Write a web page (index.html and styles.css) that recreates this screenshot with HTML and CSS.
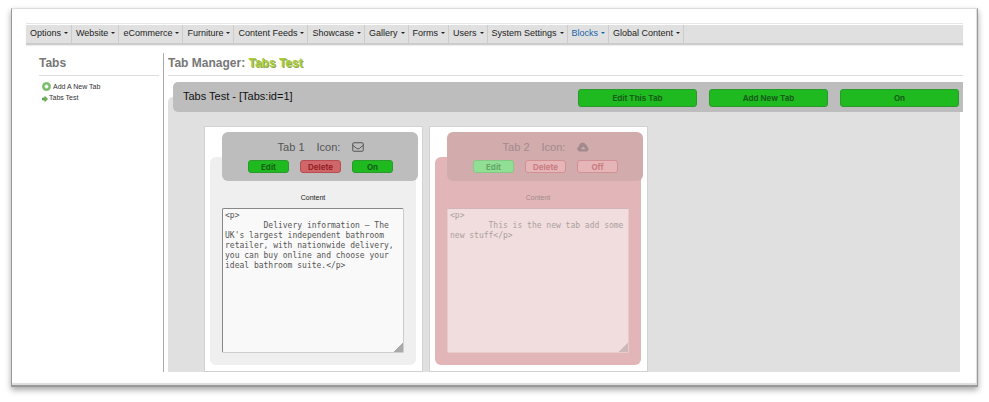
FILE: index.html
```html
<!DOCTYPE html>
<html lang="en">
<head>
<meta charset="utf-8">
<title>Tab Manager</title>
<link rel="stylesheet" href="styles.css">
</head>
<body>
<div class="frame">
  <nav class="nav">
    <a href="#">Options</a>
    <a href="#">Website</a>
    <a href="#">eCommerce</a>
    <a href="#">Furniture</a>
    <a href="#">Content Feeds</a>
    <a href="#">Showcase</a>
    <a href="#">Gallery</a>
    <a href="#">Forms</a>
    <a href="#">Users</a>
    <a href="#">System Settings</a>
    <a href="#" class="active">Blocks</a>
    <a href="#">Global Content</a>
  </nav>
  <div class="columns">
    <aside class="side">
      <h2 class="title">Tabs</h2>
      <ul class="links">
        <li><a href="#"><svg class="plus" viewBox="0 0 16 16"><circle cx="8" cy="8" r="7" fill="#6cb85c" stroke="#8fc685" stroke-width="2"/><path d="M8 4.500v7M4.500 8h7" stroke="#fff" stroke-width="3.4"/></svg>Add A New Tab</a></li>
        <li><a href="#"><svg class="arrow" viewBox="0 0 12 12"><path d="M1 4h5V1l5 5-5 5V8H1z" fill="#72b855" stroke="#438c35" stroke-width="1.4"/></svg>Tabs Test</a></li>
      </ul>
    </aside>
    <main class="main">
      <h1 class="title">Tab Manager: <span class="name">Tabs Test</span></h1>
      <section class="group">
        <header class="group-head">
          <h2>Tabs Test - [Tabs:id=1]</h2>
          <div class="actions">
            <button class="btn">Edit This Tab</button>
            <button class="btn">Add New Tab</button>
            <button class="btn">On</button>
          </div>
        </header>
        <div class="group-body">
          <article class="card">
            <header class="card-head">
              <div class="card-title"><span>Tab 1</span><span>Icon:</span>
                <svg class="icon" viewBox="0 0 24 24" fill="none" stroke="currentColor" stroke-width="2"><rect x="1.5" y="3.5" width="21" height="17" rx="2"/><path d="M1.5 8.5l8 6.5q2.500 1.800 5 0l8-6.500"/></svg>
              </div>
              <div class="card-actions">
                <button class="btn">Edit</button>
                <button class="btn red">Delete</button>
                <button class="btn">On</button>
              </div>
            </header>
            <div class="card-body">
              <label for="content1">Content</label>
              <textarea id="content1" spellcheck="false">&lt;p&gt;
	Delivery information – The UK's largest independent bathroom retailer, with nationwide delivery, you can buy online and choose your ideal bathroom suite.&lt;/p&gt;</textarea>
            </div>
          </article>
          <article class="card off">
            <header class="card-head">
              <div class="card-title"><span>Tab 2</span><span>Icon:</span>
                <svg class="icon" viewBox="0 0 24 24"><path d="M6 21a5.500 5.500 0 0 1-2-10.600A7 7 0 0 1 17 6.500a4.500 4.500 0 0 1 3 5A5 5 0 0 1 19 21z" fill="currentColor"/><path d="M7.500 16.500l5-5.500 5 5.500z" fill="#d2abac"/></svg>
              </div>
              <div class="card-actions">
                <button class="btn">Edit</button>
                <button class="btn red">Delete</button>
                <button class="btn red">Off</button>
              </div>
            </header>
            <div class="card-body">
              <label for="content2">Content</label>
              <textarea id="content2" spellcheck="false">&lt;p&gt;
	This is the new tab add some new stuff&lt;/p&gt;</textarea>
            </div>
          </article>
        </div>
      </section>
    </main>
  </div>
</div>
</body>
</html>
```
FILE: styles.css
```css
* { box-sizing: border-box; }

body {
  margin: 0;
  padding: 8px 11px 14px;
  background: #fff;
  color: #222;
  font-family: "Liberation Sans", Arial, sans-serif;
}

h1, h2, ul { margin: 0; padding: 0; }
a { color: inherit; text-decoration: none; }

.frame {
  padding: 14px 14px 13px;
  background: #fff;
  border: 1px solid #999;
  border-top-color: #ddd;
  border-bottom: 2px solid #999;
  box-shadow: 0 3px 6px rgba(0, 0, 0, 0.35), inset -1px -2px 1px #ddd;
}

.nav {
  display: flex;
  height: 22px;
  padding-top: 1px;
  border-top: 1px solid #e6e6e6;
  border-bottom: 2px solid #ccc;
  background: #e0e0e0;
  box-shadow: 0 1px 1px #eee, inset 0 1px #fff;
}

.nav a {
  display: flex;
  align-items: center;
  gap: 3px;
  padding: 0 3px 2px 4px;
  border-right: 1px solid #ccc;
  font-size: 9px;
  line-height: 12px;
  white-space: nowrap;
}

.nav a::after {
  content: "";
  border: 2px solid transparent;
  border-top-color: currentColor;
  border-bottom: 0;
}

.nav .active { color: #1763ab; }

.columns {
  display: flex;
  gap: 4px;
  padding-top: 8px;
}

.side {
  width: 138px;
  padding: 0 4px 0 13px;
  border-right: 1px solid #aaa;
}

.title {
  height: 23px;
  border-bottom: 1px solid #ddd;
  color: #777;
  font-size: 12px;
  line-height: 20px;
}

.name {
  color: #a9cb3c;
  text-shadow: 1px 1px 0 #8aa84a;
}

.links {
  padding: 5px 0 0 3px;
  list-style: none;
  font-size: 7px;
  color: #333;
}

.links a {
  display: flex;
  align-items: center;
  gap: 2px;
  height: 11px;
}

.plus { width: 9px; height: 9px; }
.arrow { width: 6px; height: 6px; margin-top: 3px; }
.links li + li a { gap: 1px; }

.main { flex: 1; min-width: 0; }

.group { padding-top: 6px; }

.group-head {
  position: relative;
  display: flex;
  align-items: center;
  justify-content: space-between;
  height: 30px;
  margin-left: 5px;
  padding: 0 4px 0 10px;
  border-radius: 5px 0 0 5px;
  background: #bdbdbd;
}

.group-head h2 {
  color: #111;
  font-size: 11px;
  line-height: 12px;
  font-weight: normal;
  padding-bottom: 2px;
}

.actions { display: flex; gap: 12px; padding-top: 2px; }

.btn {
  width: 119px;
  height: 18px;
  padding: 0;
  border: 1px solid #2a9a2d;
  border-radius: 3px;
  background: #1fba20;
  color: #176019;
  font: bold 8px/12px Inter, sans-serif;
}

.group-body {
  display: flex;
  gap: 6px;
  margin: -15px 3px 0 0;
  padding: 29px 0 0 36px;
  border-radius: 5px 0 0 0;
  background: #e0e0e0;
}

.card {
  width: 219px;
  padding: 5px 4px 6px 5px;
  border: 1px solid #d2d2d2;
  background: #fff;
}

.card-head {
  position: relative;
  height: 49px;
  margin-left: 12px;
  padding-top: 9px;
  border-radius: 6px;
  background: #bdbdbd;
}

.card-title {
  display: flex;
  align-items: center;
  justify-content: center;
  gap: 12px;
  height: 12px;
  padding-left: 2px;
  color: #555;
  font-size: 11px;
}

.icon { width: 12px; height: 12px; }

.card-actions {
  display: flex;
  justify-content: center;
  gap: 11px;
  padding: 7px 0 0 1px;
}

.card-actions .btn {
  width: 41px;
  height: 13px;
  line-height: 10px;
}

.card-actions .red {
  border-color: #b94c50;
  background: #cf6669;
  color: #982126;
}

.card-body {
  margin: -24px 2px 0 0;
  padding: 35px 12px 12px;
  border-radius: 6px;
  background: #efefef;
}

.card-body label {
  display: block;
  height: 16px;
  font-size: 7px;
  line-height: 12px;
  text-align: center;
}

textarea {
  display: block;
  width: 100%;
  height: 145px;
  padding: 2px;
  border: 1px solid #ccc;
  border-top-color: #888;
  border-left-color: #888;
  border-radius: 2px;
  background: #f9f9f9;
  color: #555;
  font: 8px/10px "DejaVu Sans Mono", monospace;
}

textarea::-webkit-resizer {
  background: linear-gradient(135deg, transparent 68%, #aaa 68%);
}

.off .card-head { background: #d2abac; }
.off .card-body { background: #e2b6b8; }
.off .card-title, .off label { color: #a08a8c; }
.off textarea {
  border-color: #e8cccd;
  border-top-color: #d3b5b7;
  background: #f1dddd;
  color: #aaa0a0;
}
.off textarea::-webkit-resizer {
  background: linear-gradient(135deg, transparent 68%, #cdb9ba 68%);
}
.off .btn { border-color: #84c885; background: #91df94; color: #65a568; }
.off .red { border-color: #d39093; background: #e5b5b8; color: #ca7c80; }
```
